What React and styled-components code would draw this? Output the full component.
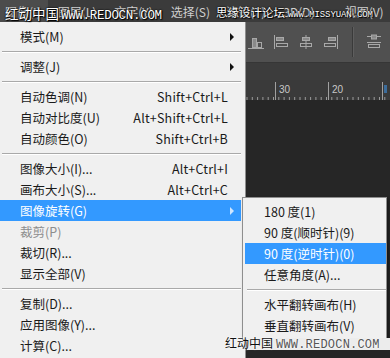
import React from 'react'
import styled, { createGlobalStyle } from 'styled-components'

const Global = createGlobalStyle`
    html, body {
        margin: 0;
        padding: 0;
        background: #262626;
    }
    body {
        font-family: "Noto Sans CJK SC", "Liberation Sans", sans-serif;
    }
`

const Screen = styled.div`
    position: relative;
    width: 390px;
    height: 358px;
    overflow: hidden;
    display: flex;
    flex-direction: column;
    background: #262626;
`

const MenuBar = styled.div`
    height: 22px;
    flex: none;
    display: flex;
    align-items: stretch;
    background: #3b3b3b;
    color: #cfcfcf;
    font-size: 12px;
    white-space: nowrap;
`

const BarItem = styled.div`
    display: flex;
    align-items: center;
    padding: 0 7px 0 5px;
    margin-right: ${p => p.gap || 6}px;
    background: ${p => (p.open ? '#4c4c4c' : 'transparent')};
`

const Body = styled.div`
    flex: 1;
    display: flex;
    min-height: 0;
`

const Menu = styled.div`
    width: 246px;
    flex: none;
    box-sizing: border-box;
    padding: 4px 4px 0 0;
    background: #f0f0f0;
    border-right: 1px solid #8e8e8e;
    display: flex;
    flex-direction: column;
`

const Item = styled.div`
    height: 21px;
    flex: none;
    display: flex;
    align-items: center;
    padding: 0 ${p => (p.sub ? 8 : 13)}px 0 ${p => (p.sub ? 19 : 20)}px;
    font-size: 12.5px;
    color: ${p => (p.active ? '#ffffff' : p.disabled ? '#8d8d8d' : '#1a1a1a')};
    background: ${p => (p.active ? '#3399ff' : 'transparent')};
    white-space: nowrap;
`

const Label = styled.span`
    flex: 1;
`

const Shortcut = styled.span`
    letter-spacing: 0.2px;
`

const Arrow = styled.span`
    width: 0;
    height: 0;
    margin-right: -6px;
    border-top: 4px solid transparent;
    border-bottom: 4px solid transparent;
    border-left: 4px solid ${p => (p.light ? '#cfe6ff' : '#111111')};
`

const Separator = styled.div`
    height: 9px;
    flex: none;
    display: flex;
    align-items: center;
    padding-left: 2px;

    &::after {
        content: '';
        flex: 1;
        height: 1px;
        background: #a9a9a9;
        box-shadow: 0 1px 0 #ffffff;
    }
`

const SubMenu = styled.div`
    position: absolute;
    left: 242px;
    top: 197px;
    width: 145px;
    box-sizing: border-box;
    padding: 3px 0 3px 2px;
    background: #f0f0f0;
    border: 1px solid #8e8e8e;
    box-shadow: 2px 2px 3px rgba(0, 0, 0, 0.4);
    display: flex;
    flex-direction: column;
`

const Workspace = styled.div`
    flex: 1;
    display: flex;
    flex-direction: column;
`

const Options = styled.div`
    height: 40px;
    flex: none;
    display: flex;
    align-items: center;
    gap: 9px;
    padding-left: 2px;
    background: #505050;
    border-bottom: 1px solid #363636;
`

const ToolIcon = styled.svg`
    flex: none;
`

const ToolDivider = styled.div`
    width: 1px;
    height: 30px;
    background: #3a3a3a;
    box-shadow: 1px 0 0 #5e5e5e;
    margin: 0 4px;
`

const Tabs = styled.div`
    height: 17px;
    flex: none;
    background: #3c3c3c;
`

const Ruler = styled.div`
    height: 20px;
    flex: none;
    background: #3a3a3a;
`

const Canvas = styled.div`
    flex: 1;
    background: #262626;
`

const Mark = styled.div`
    position: absolute;
    left: ${p => p.x}px;
    top: ${p => p.y}px;
    display: flex;
    align-items: baseline;
    gap: ${p => p.gap || 6}px;
    white-space: nowrap;
    pointer-events: none;
    line-height: 1;
`

const MarkCjk = styled.span`
    font-family: "Noto Sans CJK SC", sans-serif;
    font-size: ${p => p.size || 14}px;
    color: ${p => p.color};
    text-shadow: ${p => p.glow};
`

const MarkUrl = styled.span`
    font-family: "Liberation Mono", "DejaVu Sans Mono", monospace;
    font-size: ${p => p.size || 13}px;
    letter-spacing: ${p => p.spacing || 0}px;
    color: ${p => p.color};
    text-shadow: ${p => p.glow};
`

const Band = styled.div`
    position: absolute;
    left: 247px;
    top: 338px;
    width: 143px;
    height: 12px;
    background: #ececec;
`

const darkGlow = '0 0 2px #000, 0 0 1px #000, 1px 1px 1px #000'
const lightGlow = '0 0 2px #fff, 0 0 2px #fff'

function Tool({ kind }) {
    const c = '#a8a8a8'
    return (
        <ToolIcon width="16" height="16" viewBox="0 0 16 16" fill="none" stroke={c} strokeWidth="1">
            {kind === 'left' && (
                <>
                    <line x1="1.5" y1="1" x2="1.5" y2="15" />
                    <rect x="3.5" y="3.5" width="7" height="3" fill="#8a8a8a" />
                    <rect x="3.5" y="9.5" width="11" height="3" />
                </>
            )}
            {kind === 'center' && (
                <>
                    <line x1="8" y1="1" x2="8" y2="15" />
                    <rect x="4.5" y="3.5" width="7" height="3" fill="#8a8a8a" />
                    <rect x="2.5" y="9.5" width="11" height="3" />
                </>
            )}
            {kind === 'right' && (
                <>
                    <line x1="14.5" y1="1" x2="14.5" y2="15" />
                    <rect x="5.5" y="3.5" width="7" height="3" fill="#8a8a8a" />
                    <rect x="1.5" y="9.5" width="11" height="3" />
                </>
            )}
            {kind === 'bottom' && (
                <>
                    <line x1="0" y1="14.5" x2="16" y2="14.5" />
                    <rect x="4.5" y="4.5" width="4" height="9" fill="#8a8a8a" />
                    <rect x="9.5" y="8.5" width="4" height="5" />
                </>
            )}
            {kind === 'dist' && (
                <>
                    <line x1="1" y1="2.5" x2="15" y2="2.5" />
                    <line x1="1" y1="8.5" x2="15" y2="8.5" />
                    <rect x="5.5" y="1" width="5" height="4" fill="#8a8a8a" />
                    <rect x="2.5" y="10.5" width="11" height="3" />
                </>
            )}
        </ToolIcon>
    )
}

function RulerMarks() {
    const ticks = []
    for (let x = 1; x < 143; x += 5.3) {
        ticks.push(<line key={x} x1={x} y1="17" x2={x} y2="20" stroke="#9a9a9a" strokeWidth="1" />)
    }
    return (
        <svg width="143" height="20" viewBox="0 0 143 20">
            {ticks}
            {[29, 82, 136].map(x => (
                <line key={x} x1={x + 0.5} y1="2" x2={x + 0.5} y2="20" stroke="#a0a0a0" strokeWidth="1" />
            ))}
            <text x="33" y="13" fill="#c8c8c8" fontSize="10" fontFamily="Liberation Sans, sans-serif">30</text>
            <text x="86" y="13" fill="#c8c8c8" fontSize="10" fontFamily="Liberation Sans, sans-serif">20</text>
            <rect x="138" y="5" width="3" height="8" fill="#3c6d9c" />
        </svg>
    )
}

const mainItems = [
    { label: '模式(M)', arrow: true },
    'sep',
    { label: '调整(J)', arrow: true },
    'sep',
    { label: '自动色调(N)', keys: 'Shift+Ctrl+L' },
    { label: '自动对比度(U)', keys: 'Alt+Shift+Ctrl+L' },
    { label: '自动颜色(O)', keys: 'Shift+Ctrl+B' },
    'sep',
    { label: '图像大小(I)...', keys: 'Alt+Ctrl+I' },
    { label: '画布大小(S)...', keys: 'Alt+Ctrl+C' },
    { label: '图像旋转(G)', arrow: true, active: true },
    { label: '裁剪(P)', disabled: true },
    { label: '裁切(R)...' },
    { label: '显示全部(V)' },
    'sep',
    { label: '复制(D)...' },
    { label: '应用图像(Y)...' },
    { label: '计算(C)...' },
]

const subItems = [
    { label: '180 度(1)' },
    { label: '90 度(顺时针)(9)' },
    { label: '90 度(逆时针)(0)', active: true },
    { label: '任意角度(A)...' },
    'sep',
    { label: '水平翻转画布(H)' },
    { label: '垂直翻转画布(V)' },
]

const barItems = [
    { label: '图像(I)', open: true, gap: 5 },
    { label: '图层(L)', gap: 6 },
    { label: '文字(Y)', gap: 6 },
    { label: '选择(S)', gap: 4 },
    { label: '滤镜(T)', gap: 6 },
    { label: '3D(D)', gap: 18 },
    { label: '视图(V)', gap: 6 },
    { label: '窗口(W)' },
]

function renderItems(items, sub) {
    return items.map((it, i) =>
        it === 'sep' ? (
            <Separator key={i} />
        ) : (
            <Item key={i} sub={sub} active={it.active} disabled={it.disabled}>
                <Label>{it.label}</Label>
                {it.keys && <Shortcut>{it.keys}</Shortcut>}
                {it.arrow && <Arrow light={it.active} />}
            </Item>
        )
    )
}

export default function App() {
    return (
        <Screen>
            <Global />
            <MenuBar>
                {barItems.map(b => (
                    <BarItem key={b.label} open={b.open} gap={b.gap}>
                        {b.label}
                    </BarItem>
                ))}
            </MenuBar>
            <Body>
                <Menu>{renderItems(mainItems, false)}</Menu>
                <Workspace>
                    <Options>
                        <Tool kind="bottom" />
                        <Tool kind="left" />
                        <Tool kind="center" />
                        <Tool kind="right" />
                        <ToolDivider />
                        <Tool kind="dist" />
                        <Tool kind="dist" />
                    </Options>
                    <Tabs />
                    <Ruler>
                        <RulerMarks />
                    </Ruler>
                    <Canvas />
                </Workspace>
            </Body>
            <SubMenu>{renderItems(subItems, true)}</SubMenu>

            <Mark x={5} y={7} gap={2}>
                <MarkCjk size={13.5} color="#ffffff" glow={darkGlow}>红动中国</MarkCjk>
                <MarkUrl size={12.5} spacing={-0.3} color="#ffffff" glow={darkGlow}>WWW.REDOCN.COM</MarkUrl>
            </Mark>
            <Mark x={216} y={7} gap={3}>
                <MarkCjk size={11.5} color="#ffffff" glow={darkGlow}>思缘设计论坛</MarkCjk>
                <MarkUrl size={9} spacing={-0.1} color="#ffffff" glow={darkGlow}>WWW.MISSYUAN.COM</MarkUrl>
            </Mark>

            <Band />
            <Mark x={225} y={337} gap={3}>
                <MarkCjk size={12} color="#111111" glow={lightGlow}>红动中国</MarkCjk>
                <MarkUrl size={12} spacing={0.2} color="#555555" glow={lightGlow}>WWW.REDOCN.COM</MarkUrl>
            </Mark>
        </Screen>
    )
}
